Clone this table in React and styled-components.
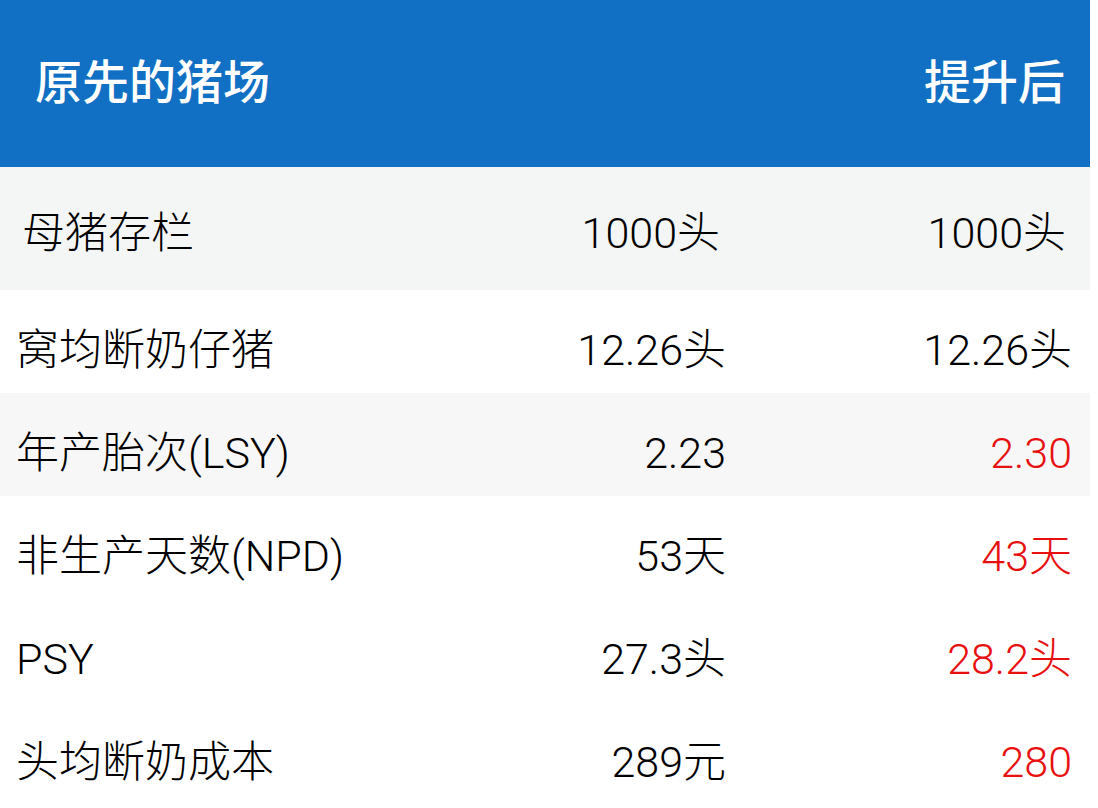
import React from "react";
import styled, { createGlobalStyle } from "styled-components";

const GlobalStyle = createGlobalStyle`
  html, body {
    margin: 0;
    padding: 0;
    background: #fff;
  }
  body {
    font-family: Roboto, "Noto Sans CJK SC", "Noto Sans", sans-serif;
    color: #000;
  }
`;

const Table = styled.div`
  width: 1090px;
`;

const Header = styled.div`
  height: 167px;
  background-color: #1170c4;
  color: #fff;
  display: flex;
  align-items: center;
  justify-content: space-between;
  padding: 0 25px 0 35px;
  box-sizing: border-box;
  font-size: 47px;
  font-weight: 500;
  line-height: 1;
`;

const HeaderTitle = styled.span`
  margin-top: -3px;
`;

const Row = styled.div`
  display: grid;
  grid-template-columns: 1fr 200px 346px;
  align-items: center;
  height: ${(p) => (p.tall ? 123 : 103)}px;
  padding: ${(p) => (p.tall ? "10px 24px 0 22px" : "17px 18px 0 16px")};
  box-sizing: border-box;
  background-color: ${(p) => p.shade || "#fff"};
  font-size: 43px;
  font-weight: 300;
  line-height: 1;
`;

const Label = styled.span`
  white-space: nowrap;
`;

const Value = styled.span`
  text-align: right;
  white-space: nowrap;
  color: ${(p) => (p.up ? "#e8100f" : "#000")};
`;

const rows = [
  { label: "母猪存栏", before: "1000头", after: "1000头", shade: "#f4f6f5", tall: true },
  { label: "窝均断奶仔猪", before: "12.26头", after: "12.26头" },
  { label: "年产胎次(LSY)", before: "2.23", after: "2.30", up: true, shade: "#f7f7f7" },
  { label: "非生产天数(NPD)", before: "53天", after: "43天", up: true },
  { label: "PSY", before: "27.3头", after: "28.2头", up: true },
  { label: "头均断奶成本", before: "289元", after: "280", up: true },
];

export default function App() {
  return (
    <>
      <GlobalStyle />
      <Table>
        <Header>
          <HeaderTitle>原先的猪场</HeaderTitle>
          <HeaderTitle>提升后</HeaderTitle>
        </Header>
        {rows.map((r) => (
          <Row key={r.label} shade={r.shade} tall={r.tall}>
            <Label>{r.label}</Label>
            <Value>{r.before}</Value>
            <Value up={r.up}>{r.after}</Value>
          </Row>
        ))}
      </Table>
    </>
  );
}
